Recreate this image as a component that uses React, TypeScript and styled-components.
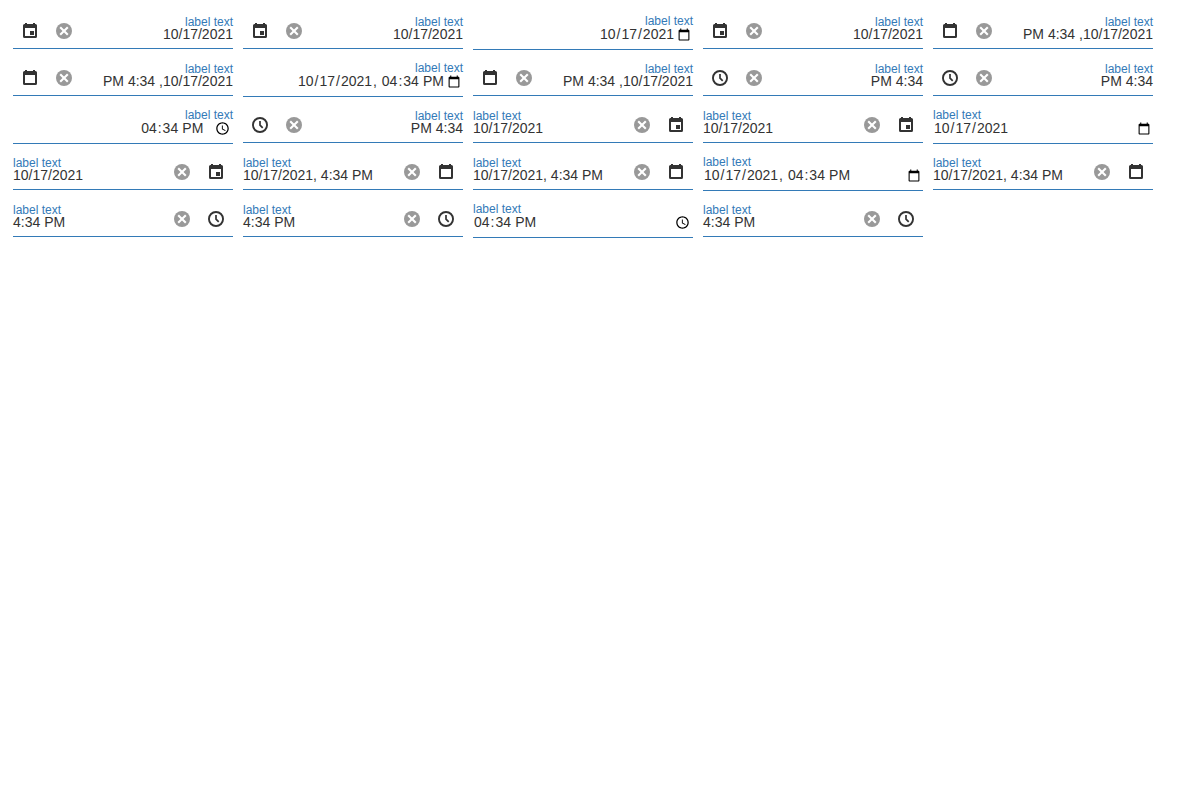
import React from 'react';
import styled, { createGlobalStyle, css } from 'styled-components';

const GlobalStyle = createGlobalStyle`
  body {
    margin: 0;
    background: #fff;
    color: #333;
    font-family: "Liberation Sans", Arial, sans-serif;
    font-size: 14px;
  }
`;

type Kind = 'date' | 'datetime-local' | 'time';
type Glyph = 'event' | 'calendar' | 'clock';

interface FieldSpec {
  kind: Kind;
  rtl?: boolean;
  native?: boolean;
}

const Page = styled.main`
  display: grid;
  grid-template-columns: repeat(5, 220px);
  grid-auto-rows: 37px;
  gap: 10px;
  align-items: center;
  padding: 13px;
`;

const Field = styled.div<{ $native?: boolean }>`
  display: flex;
  box-sizing: border-box;
  height: ${p => (p.$native ? 37 : 35)}px;
  border-bottom: 1px solid #337ab7;
`;

const Body = styled.label`
  display: flex;
  flex: 1;
  flex-direction: column;
  min-width: 0;
  padding-top: 1px;
`;

const Caption = styled.span`
  color: #337ab7;
  font-size: 12px;
  line-height: 14px;
  height: 11px;
  white-space: nowrap;
`;

const inputText = css`
  box-sizing: border-box;
  width: 100%;
  margin: 0;
  border: 0;
  outline: 0;
  background: transparent;
  color: #333;
  font: 14px "Liberation Sans", Arial, sans-serif;
`;

const TextInput = styled.span`
  ${inputText}
  line-height: 16px;
  white-space: nowrap;
`;

const NativeInput = styled.input<{ $rtl?: boolean }>`
  ${inputText}
  height: 19px;
  padding: 0;
  text-align: ${p => (p.$rtl ? 'right' : 'left')};

  &::-webkit-datetime-edit {
    padding-bottom: 1px;
  }

  &::-webkit-datetime-edit-ampm-field {
    margin-left: -0.7px;
  }
`;

const Buttons = styled.div`
  display: flex;
`;

const IconButton = styled.span`
  display: flex;
  align-items: center;
  justify-content: center;
  width: 34px;
  height: 34px;

  svg {
    display: block;
    width: 18px;
    height: 18px;
  }
`;

const ClearIcon = () => (
  <svg viewBox="0 0 18 18">
    <circle cx="9" cy="9" r="8" fill="#999" />
    <path d="M5.200 5.200l7.600 7.600M12.800 5.200l-7.600 7.600" stroke="#fff" strokeWidth="2.100" />
  </svg>
);

const DropIcon = ({ glyph }: { glyph: Glyph }) =>
  glyph === 'clock' ? (
    <svg viewBox="0 0 18 18" fill="none" stroke="#333">
      <circle cx="9" cy="9" r="7.050" strokeWidth="1.900" />
      <path d="M9 5v4.200l2.700 2.700" strokeWidth="1.700" />
    </svg>
  ) : (
    <svg viewBox="0 0 18 18" fill="#333">
      <path
        fillRule="evenodd"
        d="M4 1h2v1h6V1h2v1h.5A1.500 1.500 0 0 1 16 3.500V14.500A1.500 1.500 0 0 1 14.500 16h-11A1.500 1.500 0 0 1 2 14.500V3.500A1.500 1.500 0 0 1 3.500 2H4zM4 6v8h10V6z"
      />
      {glyph === 'event' && <path d="M9 9h4v4H9z" />}
    </svg>
  );

const glyphs: Record<Kind, Glyph> = {
  date: 'event',
  'datetime-local': 'calendar',
  time: 'clock',
};

const shown: Record<Kind, string> = {
  date: '10/17/2021',
  'datetime-local': '10/17/2021, 4:34 PM',
  time: '4:34 PM',
};

const values: Record<Kind, string> = {
  date: '2021-10-17',
  'datetime-local': '2021-10-17T16:34',
  time: '16:34',
};

const DateBox = ({ kind, rtl, native }: FieldSpec) => (
  <Field $native={native} dir={rtl ? 'rtl' : 'ltr'}>
    <Body>
      <Caption>label text</Caption>
      {native ? (
        <NativeInput $rtl={rtl} type={kind} defaultValue={values[kind]} />
      ) : (
        <TextInput>{shown[kind]}</TextInput>
      )}
    </Body>
    {!native && (
      <Buttons>
        <IconButton>
          <ClearIcon />
        </IconButton>
        <IconButton>
          <DropIcon glyph={glyphs[kind]} />
        </IconButton>
      </Buttons>
    )}
  </Field>
);

const kinds: Kind[] = ['date', 'datetime-local', 'time'];

/* Each kind is shown with four pickers; the third one is the browser's own. */
const fields: FieldSpec[] = [true, false].flatMap(rtl =>
  kinds.flatMap(kind => [0, 1, 2, 3].map(i => ({ kind, rtl, native: i === 2 }))),
);

export default function App() {
  return (
    <>
      <GlobalStyle />
      <Page>
        {fields.map((field, i) => (
          <DateBox key={i} {...field} />
        ))}
      </Page>
    </>
  );
}
